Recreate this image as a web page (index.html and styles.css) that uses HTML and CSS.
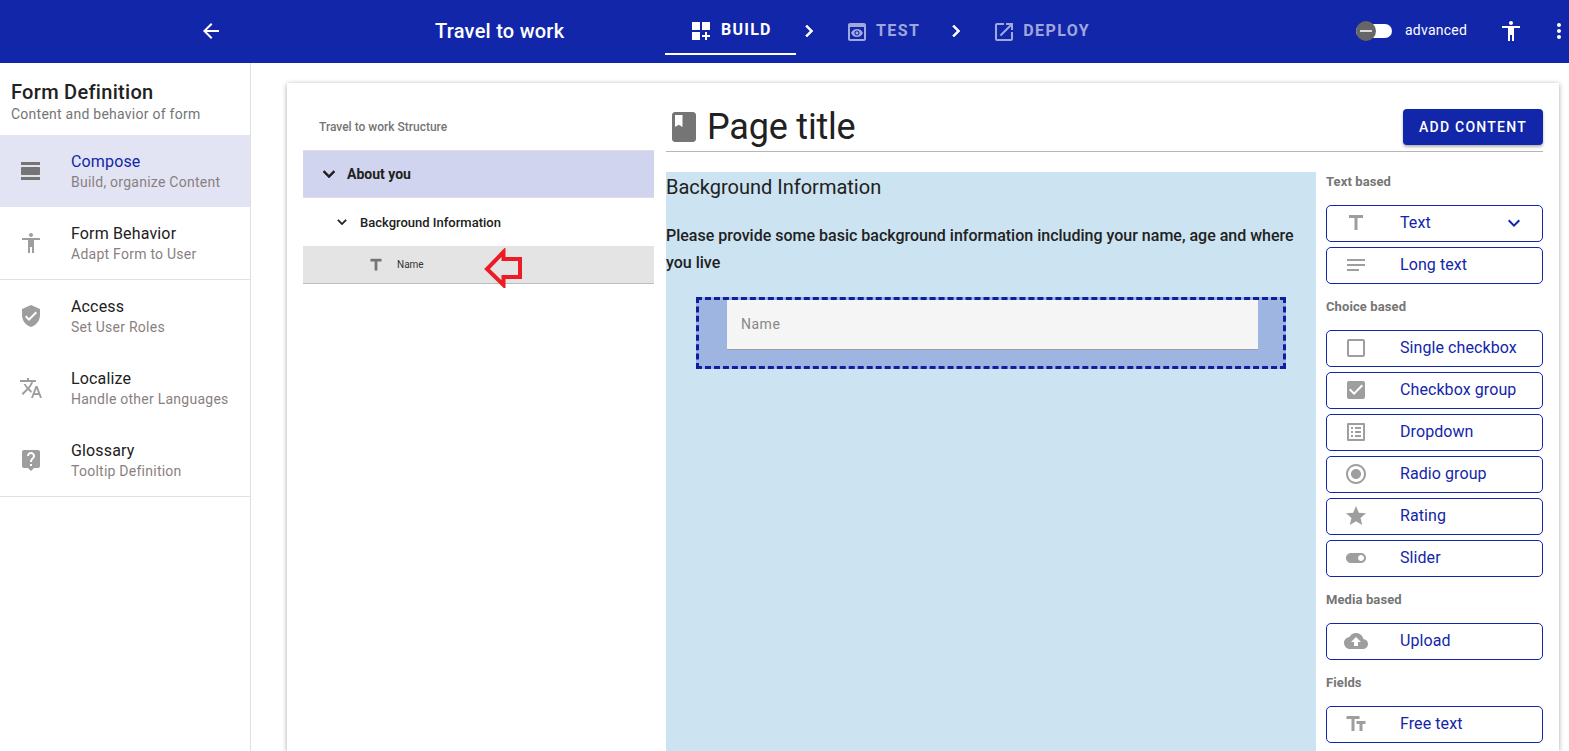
FILE: index.html
```html
<!DOCTYPE html>
<html>
<head>
  <meta charset="UTF-8">
  <title>Travel to work</title>
  <link rel="stylesheet" href="styles.css">
</head>
<body>
  <header class="topbar">
    <svg class="icon back" viewBox="0 0 24 24"><path d="M20 11H7.83l5.59-5.59L12 4l-8 8 8 8 1.41-1.41L7.83 13H20v-2z"/></svg>
    <div class="app-title">Travel to work</div>
    <nav class="steps">
      <div class="step active">
        <svg class="icon" viewBox="0 0 24 24"><path d="M3 3h8v8H3zm10 0h8v8h-8zM3 13h8v8H3zm15 0h-2v3h-3v2h3v3h2v-3h3v-2h-3z"/></svg>
        <span>BUILD</span>
      </div>
      <svg class="icon chevron" viewBox="0 0 24 24"><path d="M10 6L8.59 7.41 13.17 12l-4.58 4.59L10 18l6-6z"/></svg>
      <div class="step dim">
        <svg class="icon" viewBox="0 0 24 24"><path d="M19 3H5c-1.11 0-2 .9-2 2v14c0 1.1.89 2 2 2h14c1.1 0 2-.9 2-2V5c0-1.1-.89-2-2-2zm0 16H5V7h14v12zm-5.5-6c0 .83-.67 1.5-1.5 1.5s-1.5-.67-1.5-1.5.67-1.5 1.5-1.5 1.5.67 1.5 1.5zM12 9c-2.73 0-5.06 1.66-6 4 .94 2.34 3.27 4 6 4s5.06-1.66 6-4c-.94-2.34-3.27-4-6-4zm0 6.5c-1.38 0-2.5-1.12-2.5-2.5s1.12-2.5 2.5-2.5 2.5 1.12 2.5 2.5-1.12 2.5-2.5 2.5z"/></svg>
        <span>TEST</span>
      </div>
      <svg class="icon chevron" viewBox="0 0 24 24"><path d="M10 6L8.59 7.41 13.17 12l-4.58 4.59L10 18l6-6z"/></svg>
      <div class="step dim">
        <svg class="icon" viewBox="0 0 24 24"><path d="M19 19H5V5h7V3H5c-1.11 0-2 .9-2 2v14c0 1.1.89 2 2 2h14c1.1 0 2-.9 2-2v-7h-2v7zM14 3v2h3.59l-9.83 9.83 1.41 1.41L19 6.41V10h2V3h-7z"/></svg>
        <span>DEPLOY</span>
      </div>
    </nav>
    <div class="top-right">
      <div class="switch"><div class="switch-knob"></div></div>
      <span class="switch-label">advanced</span>
      <svg class="icon access" viewBox="0 0 24 24"><path d="M12 2c1.1 0 2 .9 2 2s-.9 2-2 2-2-.9-2-2 .9-2 2-2zm9 7h-6v13h-2v-6h-2v6H9V9H3V7h18v2z"/></svg>
      <svg class="icon more" viewBox="0 0 24 24"><path d="M12 8c1.1 0 2-.9 2-2s-.9-2-2-2-2 .9-2 2 .9 2 2 2zm0 2c-1.1 0-2 .9-2 2s.9 2 2 2 2-.9 2-2-.9-2-2-2zm0 6c-1.1 0-2 .9-2 2s.9 2 2 2 2-.9 2-2-.9-2-2-2z"/></svg>
    </div>
  </header>

  <div class="layout">
    <aside class="sidebar">
      <div class="side-head">
        <div class="side-title">Form Definition</div>
        <div class="side-sub">Content and behavior of form</div>
      </div>
      <div class="side-group">
        <div class="side-item selected">
          <svg class="icon" viewBox="0 0 24 24"><path d="M2 21h19v-3H2v3zM20 8H3c-.55 0-1 .45-1 1v6c0 .55.45 1 1 1h17c.55 0 1-.45 1-1V9c0-.55-.45-1-1-1zM2 3v3h19V3H2z"/></svg>
          <div><div class="item-name">Compose</div><div class="item-sub">Build, organize Content</div></div>
        </div>
        <div class="side-item">
          <svg class="icon" viewBox="0 0 24 24"><path d="M12 2c1.1 0 2 .9 2 2s-.9 2-2 2-2-.9-2-2 .9-2 2-2zm9 7h-6v13h-2v-6h-2v6H9V9H3V7h18v2z"/></svg>
          <div><div class="item-name">Form Behavior</div><div class="item-sub">Adapt Form to User</div></div>
        </div>
      </div>
      <div class="side-group">
        <div class="side-item">
          <svg class="icon" viewBox="0 0 24 24"><path d="M12 1L3 5v6c0 5.55 3.84 10.74 9 12 5.16-1.26 9-6.45 9-12V5l-9-4zm-2 16l-4-4 1.41-1.41L10 14.17l6.59-6.59L18 9l-8 8z"/></svg>
          <div><div class="item-name">Access</div><div class="item-sub">Set User Roles</div></div>
        </div>
        <div class="side-item">
          <svg class="icon" viewBox="0 0 24 24"><path d="M12.87 15.07l-2.54-2.51.03-.03c1.74-1.94 2.98-4.17 3.71-6.53H17V4h-7V2H8v2H1v1.99h11.17C11.5 7.92 10.44 9.75 9 11.35 8.07 10.32 7.3 9.19 6.69 8h-2c.73 1.63 1.73 3.17 2.98 4.56l-5.09 5.02L4 19l5-5 3.11 3.11.76-2.04zM18.5 10h-2L12 22h2l1.12-3h4.75L21 22h2l-4.5-12zm-2.62 7l1.62-4.33L19.12 17h-3.24z"/></svg>
          <div><div class="item-name">Localize</div><div class="item-sub">Handle other Languages</div></div>
        </div>
        <div class="side-item">
          <svg class="icon" viewBox="0 0 24 24"><path d="M19 2H5c-1.11 0-2 .9-2 2v14c0 1.1.89 2 2 2h4l3 3 3-3h4c1.1 0 2-.9 2-2V4c0-1.1-.9-2-2-2zm-6 16h-2v-2h2v2zm2.07-7.75l-.9.92C13.45 11.9 13 12.5 13 14h-2v-.5c0-1.1.45-2.1 1.17-2.83l1.24-1.26c.37-.36.59-.86.59-1.41 0-1.1-.9-2-2-2s-2 .9-2 2H8c0-2.21 1.79-4 4-4s4 1.79 4 4c0 .88-.36 1.68-.93 2.25z"/></svg>
          <div><div class="item-name">Glossary</div><div class="item-sub">Tooltip Definition</div></div>
        </div>
      </div>
    </aside>

    <main class="stage">
      <div class="card">
        <section class="tree">
          <div class="tree-title">Travel to work Structure</div>
          <div class="tree-row page">
            <svg class="icon" viewBox="0 0 24 24"><path d="M16.59 8.59L12 13.17 7.41 8.59 6 10l6 6 6-6z"/></svg>
            <span>About you</span>
          </div>
          <div class="tree-row group">
            <svg class="icon" viewBox="0 0 24 24"><path d="M16.59 8.59L12 13.17 7.41 8.59 6 10l6 6 6-6z"/></svg>
            <span>Background Information</span>
          </div>
          <div class="tree-row field">
            <svg class="icon" viewBox="0 0 24 24"><path d="M5 4v3h5.5v12h3V7H19V4z"/></svg>
            <span>Name</span>
            <svg class="red-arrow" viewBox="0 0 40 40"><path d="M20.5 4L4 21l16.5 16V29H37V11H20.5z"/></svg>
          </div>
        </section>

        <section class="editor">
          <div class="editor-head">
            <svg class="icon book" viewBox="0 0 24 24"><path d="M18 2H6c-1.1 0-2 .9-2 2v16c0 1.1.9 2 2 2h12c1.1 0 2-.9 2-2V4c0-1.1-.9-2-2-2zM6 4h5v8l-2.5-1.5L6 12V4z"/></svg>
            <h1>Page title</h1>
            <button class="add-btn">ADD CONTENT</button>
          </div>
          <div class="editor-body">
            <div class="canvas">
              <h2>Background Information</h2>
              <p>Please provide some basic background information including your name, age and where you live</p>
              <div class="drop-box">
                <div class="name-input">Name</div>
              </div>
            </div>
            <div class="palette">
              <div class="pal-label">Text based</div>
              <div class="pal-btn">
                <svg class="icon" viewBox="0 0 24 24"><path d="M5 4v3h5.5v12h3V7H19V4z"/></svg>
                <span>Text</span>
                <svg class="icon pal-caret" viewBox="0 0 24 24"><path d="M16.59 8.59L12 13.17 7.41 8.59 6 10l6 6 6-6z"/></svg>
              </div>
              <div class="pal-btn">
                <svg class="icon" viewBox="0 0 24 24"><path d="M3 18h12v-2H3v2zM3 6v2h18V6H3zm0 7h18v-2H3v2z"/></svg>
                <span>Long text</span>
              </div>

              <div class="pal-label">Choice based</div>
              <div class="pal-btn">
                <svg class="icon" viewBox="0 0 24 24"><path d="M19 5v14H5V5h14m0-2H5c-1.1 0-2 .9-2 2v14c0 1.1.9 2 2 2h14c1.1 0 2-.9 2-2V5c0-1.1-.9-2-2-2z"/></svg>
                <span>Single checkbox</span>
              </div>
              <div class="pal-btn">
                <svg class="icon" viewBox="0 0 24 24"><path d="M19 3H5c-1.11 0-2 .9-2 2v14c0 1.1.89 2 2 2h14c1.11 0 2-.9 2-2V5c0-1.1-.89-2-2-2zm-9 14l-5-5 1.41-1.41L10 14.17l7.59-7.59L19 8l-9 9z"/></svg>
                <span>Checkbox group</span>
              </div>
              <div class="pal-btn">
                <svg class="icon" viewBox="0 0 24 24"><path d="M19 5v14H5V5h14m1.1-2H3.9c-.5 0-.9.4-.9.9v16.2c0 .4.4.9.9.9h16.2c.4 0 .9-.5.9-.9V3.9c0-.5-.5-.9-.9-.9zM11 7h6v2h-6V7zm0 4h6v2h-6v-2zm0 4h6v2h-6zM7 7h2v2H7zm0 4h2v2H7zm0 4h2v2H7z"/></svg>
                <span>Dropdown</span>
              </div>
              <div class="pal-btn">
                <svg class="icon" viewBox="0 0 24 24"><path d="M12 7c-2.76 0-5 2.24-5 5s2.24 5 5 5 5-2.24 5-5-2.24-5-5-5zm0-5C6.48 2 2 6.48 2 12s4.48 10 10 10 10-4.48 10-10S17.52 2 12 2zm0 18c-4.42 0-8-3.58-8-8s3.58-8 8-8 8 3.58 8 8-3.58 8-8 8z"/></svg>
                <span>Radio group</span>
              </div>
              <div class="pal-btn">
                <svg class="icon" viewBox="0 0 24 24"><path d="M12 17.27L18.18 21l-1.64-7.03L22 9.24l-7.19-.61L12 2 9.19 8.63 2 9.24l5.46 4.73L5.82 21z"/></svg>
                <span>Rating</span>
              </div>
              <div class="pal-btn">
                <svg class="icon" viewBox="0 0 24 24"><path d="M17 7H7c-2.76 0-5 2.24-5 5s2.24 5 5 5h10c2.76 0 5-2.24 5-5s-2.24-5-5-5zm0 8c-1.66 0-3-1.34-3-3s1.34-3 3-3 3 1.34 3 3-1.34 3-3 3z"/></svg>
                <span>Slider</span>
              </div>

              <div class="pal-label">Media based</div>
              <div class="pal-btn">
                <svg class="icon" viewBox="0 0 24 24"><path d="M19.35 10.04C18.67 6.59 15.64 4 12 4 9.11 4 6.6 5.64 5.35 8.04 2.34 8.36 0 10.91 0 14c0 3.31 2.69 6 6 6h13c2.76 0 5-2.24 5-5 0-2.64-2.05-4.78-4.65-4.96zM14 13v4h-4v-4H7l5-5 5 5h-3z"/></svg>
                <span>Upload</span>
              </div>

              <div class="pal-label">Fields</div>
              <div class="pal-btn">
                <svg class="icon" viewBox="0 0 24 24"><path d="M2.5 4v3h5v12h3V7h5V4h-13zm19 5h-9v3h3v7h3v-7h3V9z"/></svg>
                <span>Free text</span>
              </div>
            </div>
          </div>
        </section>
      </div>
    </main>
  </div>
</body>
</html>
```

FILE: styles.css
```css
* {
  box-sizing: border-box;
}
body {
  margin: 0;
  height: 100vh;
  overflow: hidden;
  background: white;
  color: #212121;
  font-family: Roboto, "Liberation Sans", sans-serif;
  display: flex;
  flex-direction: column;
}
.icon {
  width: 24px;
  height: 24px;
  flex: none;
  fill: currentColor;
}

/* top bar */
.topbar {
  height: 63px;
  flex: none;
  background: #1226aa;
  color: white;
  display: flex;
  align-items: center;
  padding-left: 199px;
}
.back {
  margin-bottom: 1px;
}
.app-title {
  margin-left: 212px;
  width: 230px;
  margin-bottom: 1px;
  font-size: 20px;
  font-weight: 500;
  letter-spacing: 0.25px;
}
.steps {
  display: flex;
  align-items: center;
  height: 100%;
}
.step {
  display: flex;
  align-items: center;
  align-self: flex-start;
  gap: 8px;
  height: 55px;
  padding-top: 9px;
  font-size: 16px;
  font-weight: 700;
  letter-spacing: 1.25px;
}
.step span {
  margin-bottom: 3px;
}
.step.active {
  width: 131px;
  padding-left: 24px;
  border-bottom: 2px solid white;
}
.step.dim {
  color: rgba(255, 255, 255, 0.6);
  margin-right: 24px;
  gap: 7px;
  letter-spacing: 1.4px;
}
.chevron {
  margin: 0 24px 1px 0;
  stroke: currentColor;
  stroke-width: 0.6;
}
.step.active + .chevron {
  margin-left: 1px;
}
.top-right {
  margin-left: auto;
  display: flex;
  align-items: center;
  margin-bottom: 1px;
}
.switch {
  width: 36px;
  height: 14px;
  margin-right: 13px;
  border-radius: 7px;
  background: white;
  position: relative;
}
.switch-knob {
  position: absolute;
  left: 0;
  top: -3px;
  width: 20px;
  height: 20px;
  border-radius: 50%;
  background: #666;
}
.switch-knob::after {
  content: "";
  position: absolute;
  left: 4px;
  top: 9px;
  width: 12px;
  height: 2px;
  background: #ddd;
}
.switch-label {
  width: 94px;
  margin-bottom: 2px;
  font-size: 14px;
  letter-spacing: 0.25px;
}
.more {
  margin-left: 24px;
  margin-right: -2px;
}

/* left side */
.layout {
  flex: 1;
  display: flex;
  min-height: 0;
}
.sidebar {
  width: 251px;
  flex: none;
  border-right: 1px solid #e0e0e0;
}
.side-head {
  height: 72px;
  padding: 18px 11px 0;
}
.side-title {
  font-size: 20px;
  font-weight: 500;
  line-height: 23px;
  letter-spacing: 0.3px;
}
.side-sub {
  font-size: 14px;
  color: #757575;
  line-height: 20px;
  letter-spacing: 0.25px;
}
.side-group {
  border-bottom: 1px solid #e0e0e0;
}
.side-item {
  height: 72px;
  display: flex;
  align-items: center;
  padding-left: 19px;
  gap: 28px;
}
.side-item .icon {
  color: #9e9e9e;
}
.side-item.selected {
  background: #e2e4f4;
}
.side-item.selected .item-name {
  color: #1226aa;
}
.side-item.selected .icon {
  color: #757575;
}
.item-name {
  font-size: 16px;
  line-height: 24px;
  margin-bottom: -2px;
  letter-spacing: 0.15px;
}
.item-sub {
  font-size: 14px;
  line-height: 20px;
  color: #8a7f7f;
  letter-spacing: 0.25px;
}

/* card */
.stage {
  flex: 1;
  min-width: 0;
  padding: 20px 10px 0 36px;
}
.card {
  height: 100%;
  background: white;
  box-shadow: 0 1px 5px rgba(0, 0, 0, 0.35);
  display: flex;
  padding: 26px 16px 0;
  gap: 12px;
}

/* structure tree */
.tree {
  width: 351px;
  flex: none;
}
.tree-title {
  height: 41px;
  padding: 10px 0 0 16px;
  font-size: 12px;
  font-weight: 500;
  color: #757575;
  line-height: 16px;
}
.tree-row {
  display: flex;
  align-items: center;
  position: relative;
}
.tree-row.page {
  height: 48px;
  padding-left: 14px;
  gap: 6px;
  background: #d0d4ee;
  border-top: 1px solid #dcdcec;
  border-bottom: 1px solid #dcdcec;
  font-size: 14px;
  font-weight: 700;
}
.tree-row.page .icon,
.tree-row.group .icon {
  stroke: currentColor;
  stroke-width: 0.6;
}
.tree-row.group {
  height: 48px;
  padding-left: 30px;
  gap: 9px;
  font-size: 13px;
  font-weight: 500;
}
.tree-row.group .icon {
  width: 18px;
  height: 18px;
}
.tree-row.field {
  height: 38px;
  padding-left: 64px;
  gap: 12px;
  background: #e4e4e4;
  border-bottom: 1px solid #bdbdbd;
  font-size: 10px;
  color: #333;
}
.tree-row.field > .icon {
  width: 18px;
  height: 18px;
  color: #757575;
  stroke: currentColor;
  stroke-width: 0.6;
}
.red-arrow {
  position: absolute;
  left: 180px;
  top: 2px;
  width: 40px;
  height: 40px;
  fill: none;
  stroke: #ed1c24;
  stroke-width: 4;
}

/* editor */
.editor {
  flex: 1;
  min-width: 0;
  display: flex;
  flex-direction: column;
}
.editor-head {
  height: 43px;
  flex: none;
  border-bottom: 1px solid #b5b5b5;
  display: flex;
  align-items: flex-start;
}
.book {
  width: 36px;
  height: 36px;
  color: #757575;
}
.editor-head h1 {
  margin: 0 0 0 5px;
  font-size: 36px;
  font-weight: 400;
  line-height: 36px;
  letter-spacing: -0.2px;
}
.add-btn {
  margin-left: auto;
  width: 140px;
  height: 36px;
  border: none;
  border-radius: 4px;
  background: #1226aa;
  color: white;
  font-family: inherit;
  font-size: 14px;
  font-weight: 500;
  letter-spacing: 1.25px;
  box-shadow: 0 2px 3px rgba(0, 0, 0, 0.3);
}
.editor-body {
  flex: 1;
  min-height: 0;
  display: flex;
  margin-top: 20px;
  gap: 10px;
}
.canvas {
  width: 650px;
  flex: none;
  background: #cce3f1;
}
.canvas h2 {
  margin: 0;
  padding-top: 4px;
  font-size: 20px;
  font-weight: 400;
  line-height: 23px;
}
.canvas p {
  margin: 23px 0 0;
  font-size: 16px;
  font-weight: 500;
  line-height: 27px;
}
.drop-box {
  margin: 21px 30px 0;
  height: 72px;
  padding: 0 25px 0 28px;
  background: #9db5e0;
  border: 3px dashed #0d1f9e;
}
.name-input {
  height: 50px;
  padding: 0 14px 2px;
  display: flex;
  align-items: center;
  background: #f5f5f5;
  border-bottom: 1px solid #9e9e9e;
  color: #888;
  font-size: 14px;
  letter-spacing: 0.5px;
}

/* palette */
.palette {
  flex: 1;
  min-width: 0;
}
.pal-label {
  height: 18px;
  margin: 13px 0 15px;
  font-size: 13px;
  font-weight: 700;
  line-height: 20px;
  letter-spacing: 0.1px;
  color: #757575;
}
.pal-label:first-child {
  margin-top: 0;
}
.pal-btn {
  height: 37px;
  margin-bottom: 5px;
  border: 1px solid #1226aa;
  border-radius: 5px;
  display: flex;
  align-items: center;
  padding: 0 0 2px 17px;
  gap: 32px;
  color: #1226aa;
  font-size: 16px;
  letter-spacing: 0.08px;
}
.pal-btn > .icon {
  color: #9e9e9e;
}
.pal-btn > .pal-caret {
  margin-left: auto;
  margin-right: 16px;
  color: #1226aa;
}
```
